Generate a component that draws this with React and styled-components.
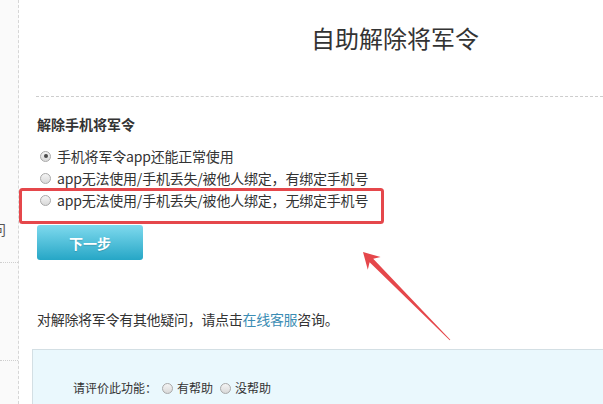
import React from "react";
import styled, { createGlobalStyle } from "styled-components";

const GlobalStyle = createGlobalStyle`
  html, body {
    margin: 0;
    padding: 0;
    background: #fff;
    overflow: hidden;
  }
  body {
    font-family: "Noto Sans CJK SC", "Microsoft YaHei", sans-serif;
    color: #333;
  }
`;

const Page = styled.div`
  position: relative;
  display: flex;
  width: 603px;
  height: 404px;
  overflow: hidden;
`;

const Sidebar = styled.div`
  width: 18px;
  flex-shrink: 0;
  background: #fafafa;
  border-right: 1px dashed #d6d6d6;
  display: flex;
  flex-direction: column;
  overflow: hidden;
`;

const SideItem = styled.div`
  height: ${(p) => p.$h}px;
  flex-shrink: 0;
  border-bottom: 1px dotted #cfcfcf;
  display: flex;
  align-items: flex-end;
  padding-bottom: ${(p) => p.$pb || 0}px;
  box-sizing: border-box;
`;

const SideGlyph = styled.span`
  margin-left: -8px;
  font-size: 14px;
  line-height: 14px;
  color: #555;
`;

const Main = styled.div`
  flex: 1;
  min-width: 0;
  padding-left: 17px;
  overflow: hidden;
`;

const Header = styled.div`
  height: 97px;
  border-bottom: 1px dashed #cdcdcd;
  box-sizing: border-box;
  padding: 22px 0 0 275px;
`;

const Title = styled.h1`
  margin: 0;
  font-size: 24px;
  font-weight: normal;
  line-height: 32px;
  color: #333;
`;

const Body = styled.div`
  padding-left: 1px;
`;

const SectionTitle = styled.h3`
  margin: 17px 0 11px;
  font-size: 14px;
  font-weight: bold;
  line-height: 20px;
  color: #333;
`;

const OptionList = styled.div`
  display: flex;
  flex-direction: column;
`;

const Option = styled.label`
  display: flex;
  align-items: center;
  height: 22px;
  font-size: 14px;
  letter-spacing: -0.2px;
  color: #333;
  padding-left: 3px;
`;

const Radio = styled.span`
  position: relative;
  width: 11px;
  height: 11px;
  border-radius: 50%;
  border: 1px solid #a9a9a9;
  background: linear-gradient(#f4f4f4, #d9d9d9);
  margin-right: ${(p) => p.$gap || 6}px;
  flex-shrink: 0;
  box-sizing: border-box;

  &::after {
    content: "";
    display: ${(p) => (p.$checked ? "block" : "none")};
    position: absolute;
    left: 2.5px;
    top: 2.5px;
    width: 4px;
    height: 4px;
    border-radius: 50%;
    background: #4a4a4a;
  }
`;

const NextButton = styled.button`
  display: block;
  margin-top: 14px;
  width: 106px;
  height: 35px;
  border: none;
  border-radius: 3px;
  background: linear-gradient(#7fdaee, #26a6c6);
  color: #fff;
  font-family: inherit;
  font-size: 14px;
  font-weight: bold;
  text-shadow: 0 1px 1px rgba(0, 0, 0, 0.15);
  cursor: pointer;
`;

const Help = styled.p`
  margin: 49px 0 0;
  font-size: 14px;
  letter-spacing: -0.3px;
  line-height: 20px;
  color: #333;
`;

const Link = styled.a`
  color: #3b8db4;
  text-decoration: none;
`;

const RateBox = styled.div`
  margin: 20px 0 0 -5px;
  height: 80px;
  background: #eaf8fd;
  border: 1px solid #d3dfe4;
  border-right: none;
  padding: 28px 0 0 40px;
  box-sizing: border-box;
  display: flex;
  align-items: flex-start;
  font-size: 12px;
  line-height: 20px;
  color: #333;
`;

const RateLabel = styled.span`
  margin-right: 5px;
`;

const RateOption = styled.span`
  display: inline-flex;
  align-items: center;
  margin-right: 7px;
`;

const Annotation = styled.svg`
  position: absolute;
  left: 0;
  top: 0;
  pointer-events: none;
`;

export default function App() {
  return (
    <>
      <GlobalStyle />
      <Page>
        <Sidebar>
          <SideItem $h={263} $pb={26}>
            <SideGlyph>问</SideGlyph>
          </SideItem>
          <SideItem $h={98} />
        </Sidebar>
        <Main>
          <Header>
            <Title>自助解除将军令</Title>
          </Header>
          <Body>
            <SectionTitle>解除手机将军令</SectionTitle>
            <OptionList>
              <Option>
                <Radio $checked />
                手机将军令app还能正常使用
              </Option>
              <Option>
                <Radio />
                app无法使用/手机丢失/被他人绑定，有绑定手机号
              </Option>
              <Option>
                <Radio />
                app无法使用/手机丢失/被他人绑定，无绑定手机号
              </Option>
            </OptionList>
            <NextButton>下一步</NextButton>
            <Help>
              对解除将军令有其他疑问，请点击<Link href="#">在线客服</Link>咨询。
            </Help>
            <RateBox>
              <RateLabel>请评价此功能：</RateLabel>
              <RateOption>
                <Radio $gap={4} />
                有帮助
              </RateOption>
              <RateOption>
                <Radio $gap={4} />
                没帮助
              </RateOption>
            </RateBox>
          </Body>
        </Main>
        <Annotation width="603" height="404" viewBox="0 0 603 404">
          <rect
            x="20.5"
            y="189.5"
            width="362"
            height="33"
            rx="2"
            fill="none"
            stroke="#e5474b"
            strokeWidth="3"
          />
          <polygon
            points="363,252 380.6,257.1 373.2,258.7 450.3,339.8 449.7,340.2 369.6,262.3 367.8,269.7"
            fill="#e5474b"
          />
        </Annotation>
      </Page>
    </>
  );
}
